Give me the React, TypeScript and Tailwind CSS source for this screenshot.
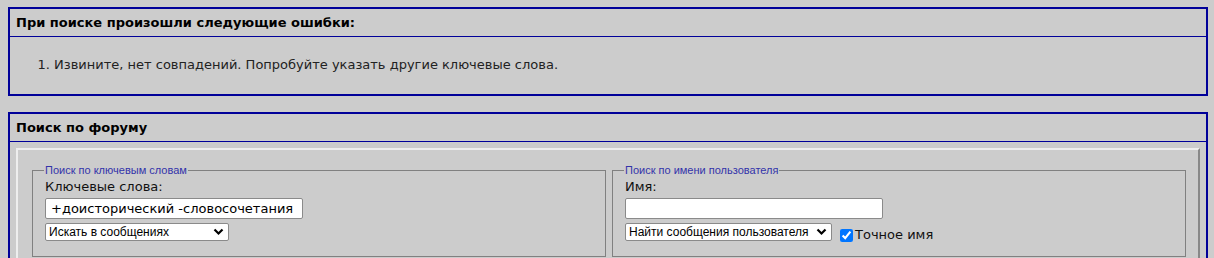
import React, { useState } from 'react';

const verdana = { fontFamily: '"DejaVu Sans", Verdana, sans-serif' };
const tahoma = { fontFamily: '"Liberation Sans", Tahoma, sans-serif' };

const Box: React.FC<{ title: string; children: React.ReactNode; className?: string }> = ({ title, children, className }) => (
  <div className={`w-[1200px] border-2 border-[#000099] ${className ?? ''}`}>
    <div className="h-[28px] border-b border-[#000099] pl-[6px] pt-[6px] text-[13px] font-bold leading-[16px] text-black" style={verdana}>
      {title}
    </div>
    {children}
  </div>
);

const Chevron = () => (
  <svg className="pointer-events-none absolute right-[5px] top-[5px]" width="11" height="8" viewBox="0 0 11 8">
    <path d="M1.5 1.5 L5.5 5.5 L9.5 1.5" fill="none" stroke="#000" strokeWidth="2.2" />
  </svg>
);

export default function App() {
  const [keywords, setKeywords] = useState('+доисторический -словосочетания');
  const [name, setName] = useState('');
  const [exact, setExact] = useState(true);

  return (
    <div className="min-h-[258px] bg-[#cccccc] pt-[7px] pl-[8px]">
      <Box title="При поиске произошли следующие ошибки:">
        <ol className="h-[57px] list-decimal pl-[44px] pt-[20px] text-[13px] leading-[16px] text-[#222]" style={verdana}>
          <li>Извините, нет совпадений. Попробуйте указать другие ключевые слова.</li>
        </ol>
      </Box>

      <Box title="Поиск по форуму" className="mt-[16px]">
        <div className="px-[6px] pt-[6px] pb-[20px]">
          <div className="border-2 border-t-[#eeeeee] border-l-[#eeeeee] border-r-[#888888] border-b-[#888888] pl-[14px] pr-[12px] pt-[14px] pb-[12px]">
            <div className="grid grid-cols-2 gap-[6px]">
              <fieldset className="border border-[#808080] pb-[11px] pl-[12px]">
                <legend className="-ml-[1px] px-[1px] text-[11px] leading-[13px] text-[#3333aa]" style={tahoma}>
                  Поиск по ключевым словам
                </legend>
                <div className="pt-[2px] text-[13px] leading-[16px] text-[#111]" style={verdana}>Ключевые слова:</div>
                <input
                  value={keywords}
                  onChange={(e) => setKeywords(e.target.value)}
                  className="mt-[3px] block h-[21px] w-[258px] rounded-[2px] border border-[#8a8a8a] bg-white px-[5px] text-[13px] text-black outline-none"
                  style={verdana}
                />
                <div className="relative mt-[4px] w-[184px]">
                  <select className="block h-[18px] w-full appearance-none rounded-[2px] border border-[#8a8a8a] bg-white pl-[3px] text-[12px] leading-[16px] text-black outline-none" style={tahoma}>
                    <option>Искать в сообщениях</option>
                    <option>Искать только в заголовках</option>
                  </select>
                  <Chevron />
                </div>
              </fieldset>

              <fieldset className="border border-[#808080] pb-[13px] pl-[12px]">
                <legend className="-ml-[1px] px-[1px] text-[11px] leading-[13px] text-[#3333aa]" style={tahoma}>
                  Поиск по имени пользователя
                </legend>
                <div className="pt-[2px] text-[13px] leading-[16px] text-[#111]" style={verdana}>Имя:</div>
                <input
                  value={name}
                  onChange={(e) => setName(e.target.value)}
                  className="mt-[3px] block h-[21px] w-[258px] rounded-[2px] border border-[#8a8a8a] bg-white px-[5px] text-[13px] text-black outline-none"
                  style={verdana}
                />
                <div className="mt-[4px] flex items-start">
                  <div className="relative w-[207px]">
                    <select className="block h-[18px] w-full appearance-none rounded-[2px] border border-[#8a8a8a] bg-white pl-[3px] text-[12px] leading-[16px] text-black outline-none" style={tahoma}>
                      <option>Найти сообщения пользователя</option>
                      <option>Найти темы пользователя</option>
                    </select>
                    <Chevron />
                  </div>
                  <label className="ml-[8px] mt-[4px] flex items-center text-[13px] leading-[16px] text-[#111]" style={verdana}>
                    <input
                      type="checkbox"
                      checked={exact}
                      onChange={(e) => setExact(e.target.checked)}
                      className="m-0 h-[13px] w-[13px] accent-[#0075ff]"
                    />
                    <span className="ml-[2px]">Точное имя</span>
                  </label>
                </div>
              </fieldset>
            </div>
          </div>
        </div>
      </Box>
    </div>
  );
}
